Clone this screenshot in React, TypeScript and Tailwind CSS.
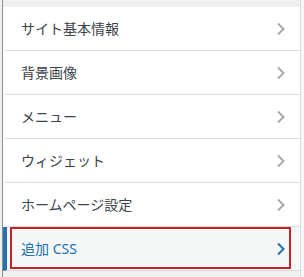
import React from "react";

const items = ["サイト基本情報", "背景画像", "メニュー", "ウィジェット", "ホームページ設定"];

function Chevron({ color }: { color: string }) {
  return (
    <svg width="10" height="14" viewBox="0 0 10 14" fill="none">
      <path d="M2 1.5 L7.5 7 L2 12.5" stroke={color} strokeWidth="2" strokeLinecap="butt" strokeLinejoin="miter" />
    </svg>
  );
}

export default function App() {
  return (
    <div className="flex h-[277px] w-[304px] bg-[#f0f0f1] font-['Noto_Sans','Noto_Sans_CJK_JP',sans-serif] text-[14px]">
      <div className="w-[2px] bg-[#f0f0f1]" />
      <div className="w-[1px] bg-[#8c8f94]" />
      <div className="flex flex-1 flex-col pt-[7px]">
        {items.map((t) => (
          <div
            key={t}
            className="flex h-[44px] items-center justify-between border-b border-l-4 border-b-[#dcdcde] border-l-white bg-white pl-[14px] pr-[14px] text-[#3c434a]"
          >
            <span>{t}</span>
            <Chevron color="#a7aaad" />
          </div>
        ))}
        <div className="relative flex h-[44px] items-center justify-between border-b border-l-4 border-b-[#dcdcde] border-l-[#2271b1] bg-[#f6f7f7] pl-[14px] pr-[14px] text-[#2271b1]">
          <span>追加 CSS</span>
          <Chevron color="#2271b1" />
          <div className="absolute bottom-[1px] left-[3px] right-[9px] top-0 border-2 border-[#c3222b]" />
        </div>
      </div>
      <div className="w-[1px] bg-[#dcdcde]" />
      <div className="w-[3px] bg-[#f6f7f7]" />
    </div>
  );
}
